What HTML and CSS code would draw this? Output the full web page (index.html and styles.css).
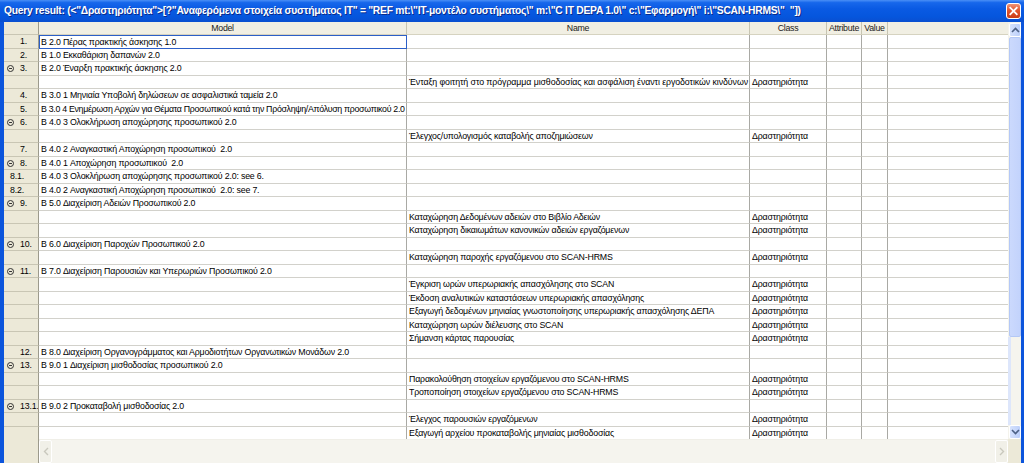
FILE: index.html
```html
<!DOCTYPE html>
<html>
<head>
<meta charset="utf-8">
<link rel="stylesheet" href="styles.css">
</head>
<body>
<div class="window">
  <div class="titlebar">
    <span class="title">Query result: (&lt;"Δραστηριότητα"&gt;[?"Αναφερόμενα στοιχεία συστήματος IT" = "REF mt:\"IT-μοντέλο συστήματος\" m:\"C IT DEPA 1.0\" c:\"Εφαρμογή\" i:\"SCAN-HRMS\"&nbsp; "])</span>
    <span class="close"><svg width="15" height="16" viewBox="0 0 15 16"><defs><linearGradient id="cg" x1="0" y1="0" x2="0" y2="1"><stop offset="0" stop-color="#f09a7e"/><stop offset="0.45" stop-color="#e2562e"/><stop offset="1" stop-color="#c83b14"/></linearGradient></defs><rect x="0.5" y="0.5" width="14" height="15" rx="2.5" fill="url(#cg)" stroke="#ffffff"/><path d="M4.3 4.8 L10.7 11.2 M10.7 4.8 L4.3 11.2" stroke="#ffffff" stroke-width="1.8" stroke-linecap="square"/></svg></span>
  </div>
  <div class="body">
    <div class="main">
      <div class="table">
        <div class="row head">
          <div class="c rn"></div><div class="c">Model</div><div class="c">Name</div><div class="c">Class</div><div class="c">Attribute</div><div class="c">Value</div><div class="c fill"></div>
        </div>
        <div class="row"><div class="c rn"><span class="num">1.</span></div><div class="c t focus">B 2.0 Πέρας πρακτικής άσκησης 1.0</div><div class="c t"></div><div class="c t"></div><div class="c"></div><div class="c"></div><div class="c fill"></div></div>
        <div class="row"><div class="c rn"><span class="num">2.</span></div><div class="c t">B 1.0 Εκκαθάριση δαπανών 2.0</div><div class="c t"></div><div class="c t"></div><div class="c"></div><div class="c"></div><div class="c fill"></div></div>
        <div class="row"><div class="c rn"><span class="ex"></span><span class="num">3.</span></div><div class="c t">B 2.0 Έναρξη πρακτικής άσκησης 2.0</div><div class="c t"></div><div class="c t"></div><div class="c"></div><div class="c"></div><div class="c fill"></div></div>
        <div class="row"><div class="c rn"></div><div class="c t"></div><div class="c t wide">Ένταξη φοιτητή στο πρόγραμμα μισθοδοσίας και ασφάλιση έναντι εργοδοτικών κινδύνων</div><div class="c t">Δραστηριότητα</div><div class="c"></div><div class="c"></div><div class="c fill"></div></div>
        <div class="row"><div class="c rn"><span class="num">4.</span></div><div class="c t">B 3.0 1 Μηνιαία Υποβολή δηλώσεων σε ασφαλιστικά ταμεία 2.0</div><div class="c t"></div><div class="c t"></div><div class="c"></div><div class="c"></div><div class="c fill"></div></div>
        <div class="row"><div class="c rn"><span class="num">5.</span></div><div class="c t tight">B 3.0 4 Ενημέρωση Αρχών για Θέματα Προσωπικού κατά την Πρόσληψη/Απόλυση προσωπικού 2.0</div><div class="c t"></div><div class="c t"></div><div class="c"></div><div class="c"></div><div class="c fill"></div></div>
        <div class="row"><div class="c rn"><span class="ex"></span><span class="num">6.</span></div><div class="c t">B 4.0 3 Ολοκλήρωση αποχώρησης προσωπικού 2.0</div><div class="c t"></div><div class="c t"></div><div class="c"></div><div class="c"></div><div class="c fill"></div></div>
        <div class="row"><div class="c rn"></div><div class="c t"></div><div class="c t">Έλεγχος/υπολογισμός καταβολής αποζημιώσεων</div><div class="c t">Δραστηριότητα</div><div class="c"></div><div class="c"></div><div class="c fill"></div></div>
        <div class="row"><div class="c rn"><span class="num">7.</span></div><div class="c t">B 4.0 2 Αναγκαστική Αποχώρηση προσωπικού&nbsp; 2.0</div><div class="c t"></div><div class="c t"></div><div class="c"></div><div class="c"></div><div class="c fill"></div></div>
        <div class="row"><div class="c rn"><span class="ex"></span><span class="num">8.</span></div><div class="c t">B 4.0 1 Αποχώρηση προσωπικού&nbsp; 2.0</div><div class="c t"></div><div class="c t"></div><div class="c"></div><div class="c"></div><div class="c fill"></div></div>
        <div class="row"><div class="c rn"><span class="num sub">8.1.</span></div><div class="c t">B 4.0 3 Ολοκλήρωση αποχώρησης προσωπικού 2.0: see 6.</div><div class="c t"></div><div class="c t"></div><div class="c"></div><div class="c"></div><div class="c fill"></div></div>
        <div class="row"><div class="c rn"><span class="num sub">8.2.</span></div><div class="c t">B 4.0 2 Αναγκαστική Αποχώρηση προσωπικού&nbsp; 2.0: see 7.</div><div class="c t"></div><div class="c t"></div><div class="c"></div><div class="c"></div><div class="c fill"></div></div>
        <div class="row"><div class="c rn"><span class="ex"></span><span class="num">9.</span></div><div class="c t">B 5.0 Διαχείριση Αδειών Προσωπικού 2.0</div><div class="c t"></div><div class="c t"></div><div class="c"></div><div class="c"></div><div class="c fill"></div></div>
        <div class="row"><div class="c rn"></div><div class="c t"></div><div class="c t">Καταχώρηση Δεδομένων αδειών στο Βιβλίο Αδειών</div><div class="c t">Δραστηριότητα</div><div class="c"></div><div class="c"></div><div class="c fill"></div></div>
        <div class="row"><div class="c rn"></div><div class="c t"></div><div class="c t">Καταχώρηση δικαιωμάτων κανονικών αδειών εργαζόμενων</div><div class="c t">Δραστηριότητα</div><div class="c"></div><div class="c"></div><div class="c fill"></div></div>
        <div class="row"><div class="c rn"><span class="ex"></span><span class="num">10.</span></div><div class="c t">B 6.0 Διαχείριση Παροχών Προσωπικού 2.0</div><div class="c t"></div><div class="c t"></div><div class="c"></div><div class="c"></div><div class="c fill"></div></div>
        <div class="row"><div class="c rn"></div><div class="c t"></div><div class="c t">Καταχώρηση παροχής εργαζόμενου στο SCAN-HRMS</div><div class="c t">Δραστηριότητα</div><div class="c"></div><div class="c"></div><div class="c fill"></div></div>
        <div class="row"><div class="c rn"><span class="ex"></span><span class="num">11.</span></div><div class="c t">B 7.0 Διαχείριση Παρουσιών και Υπερωριών Προσωπικού 2.0</div><div class="c t"></div><div class="c t"></div><div class="c"></div><div class="c"></div><div class="c fill"></div></div>
        <div class="row"><div class="c rn"></div><div class="c t"></div><div class="c t">Έγκριση ωρών υπερωριακής απασχόλησης στο SCAN</div><div class="c t">Δραστηριότητα</div><div class="c"></div><div class="c"></div><div class="c fill"></div></div>
        <div class="row"><div class="c rn"></div><div class="c t"></div><div class="c t">Έκδοση αναλυτικών καταστάσεων υπερωριακής απασχόλησης</div><div class="c t">Δραστηριότητα</div><div class="c"></div><div class="c"></div><div class="c fill"></div></div>
        <div class="row"><div class="c rn"></div><div class="c t"></div><div class="c t">Εξαγωγή δεδομένων μηνιαίας γνωστοποίησης υπερωριακής απασχόλησης ΔΕΠΑ</div><div class="c t">Δραστηριότητα</div><div class="c"></div><div class="c"></div><div class="c fill"></div></div>
        <div class="row"><div class="c rn"></div><div class="c t"></div><div class="c t">Καταχώρηση ωρών διέλευσης στο SCAN</div><div class="c t">Δραστηριότητα</div><div class="c"></div><div class="c"></div><div class="c fill"></div></div>
        <div class="row"><div class="c rn"></div><div class="c t"></div><div class="c t">Σήμανση κάρτας παρουσίας</div><div class="c t">Δραστηριότητα</div><div class="c"></div><div class="c"></div><div class="c fill"></div></div>
        <div class="row"><div class="c rn"><span class="num">12.</span></div><div class="c t">B 8.0 Διαχείριση Οργανογράμματος και Αρμοδιοτήτων Οργανωτικών Μονάδων 2.0</div><div class="c t"></div><div class="c t"></div><div class="c"></div><div class="c"></div><div class="c fill"></div></div>
        <div class="row"><div class="c rn"><span class="ex"></span><span class="num">13.</span></div><div class="c t">B 9.0 1 Διαχείριση μισθοδοσίας προσωπικού 2.0</div><div class="c t"></div><div class="c t"></div><div class="c"></div><div class="c"></div><div class="c fill"></div></div>
        <div class="row"><div class="c rn"></div><div class="c t"></div><div class="c t">Παρακολούθηση στοιχείων εργαζόμενου στο SCAN-HRMS</div><div class="c t">Δραστηριότητα</div><div class="c"></div><div class="c"></div><div class="c fill"></div></div>
        <div class="row"><div class="c rn"></div><div class="c t"></div><div class="c t">Τροποποίηση στοιχείων εργαζόμενου στο SCAN-HRMS</div><div class="c t">Δραστηριότητα</div><div class="c"></div><div class="c"></div><div class="c fill"></div></div>
        <div class="row"><div class="c rn"><span class="ex"></span><span class="num">13.1.</span></div><div class="c t">B 9.0 2 Προκαταβολή μισθοδοσίας 2.0</div><div class="c t"></div><div class="c t"></div><div class="c"></div><div class="c"></div><div class="c fill"></div></div>
        <div class="row"><div class="c rn"></div><div class="c t"></div><div class="c t">Έλεγχος παρουσιών εργαζόμενων</div><div class="c t">Δραστηριότητα</div><div class="c"></div><div class="c"></div><div class="c fill"></div></div>
        <div class="row"><div class="c rn"></div><div class="c t"></div><div class="c t">Εξαγωγή αρχείου προκαταβολής μηνιαίας μισθοδοσίας</div><div class="c t">Δραστηριότητα</div><div class="c"></div><div class="c"></div><div class="c fill"></div></div>
        <div class="row"><div class="c rn"></div><div class="c t"></div><div class="c t">Καταχώρηση πρόσθετων στοιχείων μισθοδοσίας</div><div class="c t">Δραστηριότητα</div><div class="c"></div><div class="c"></div><div class="c fill"></div></div>
      </div>
      <div class="vscroll">
        <div class="vtop"></div>
        <div class="sbtn"><svg width="9" height="6" viewBox="0 0 9 6"><path d="M1 5 L4.5 1.5 L8 5" fill="none" stroke="#4d6185" stroke-width="1.6"/></svg></div>
        <div class="thumb"></div>
        <div class="track"></div>
        <div class="sbtn"><svg width="9" height="6" viewBox="0 0 9 6"><path d="M1 1 L4.5 4.5 L8 1" fill="none" stroke="#4d6185" stroke-width="1.6"/></svg></div>
      </div>
    </div>
    <div class="bottom">
      <div class="rnpad"></div>
      <div class="hscroll">
        <div class="hbtn"><svg width="6" height="9" viewBox="0 0 6 9"><path d="M5 1 L1.5 4.5 L5 8" fill="none" stroke="#c9c8bd" stroke-width="1.4"/></svg></div>
        <div class="htrack"></div>
        <div class="hbtn"><svg width="6" height="9" viewBox="0 0 6 9"><path d="M1 1 L4.5 4.5 L1 8" fill="none" stroke="#c9c8bd" stroke-width="1.4"/></svg></div>
      </div>
      <div class="corner"></div>
    </div>
  </div>
</div>
</body>
</html>
```
FILE: styles.css
```css
html, body {
  margin: 0;
  padding: 0;
  background: #0a4fd6;
  overflow: hidden;
}
.window {
  width: 1024px;
  height: 463px;
  display: flex;
  flex-direction: column;
  background: #0c55dc;
  overflow: hidden;
}
.titlebar {
  height: 22px;
  flex: none;
  display: flex;
  align-items: center;
  padding-left: 4px;
  padding-right: 3px;
  background: linear-gradient(#4a8ff6 0%, #1767eb 12%, #0a5ae3 40%, #0556dd 75%, #0a4fd0 100%);
}
.title {
  flex: 1;
  color: #ffffff;
  font-family: "Liberation Sans", Arial, sans-serif;
  font-weight: bold;
  font-size: 10.3px;
  letter-spacing: -0.26px;
  white-space: nowrap;
  text-shadow: 1px 1px 0 #0a2a8a;
  padding-bottom: 1px;
}
.close {
  width: 15px;
  height: 16px;
  display: flex;
}
.body {
  flex: 1;
  display: flex;
  flex-direction: column;
  margin-left: 4px;
  margin-right: 3px;
  background: #ffffff;
  min-height: 0;
}
.main {
  height: 417px;
  display: flex;
  overflow: hidden;
}
.table {
  width: 1004px;
  flex: none;
  font-family: "Liberation Sans", Arial, sans-serif;
  font-size: 8.8px;
  letter-spacing: -0.18px;
  color: #000000;
}
.row {
  display: grid;
  grid-template-columns: 35px 368px 343px 77px 35px 26px 120px;
  height: 13.5px;
}
.row.head {
  height: 13px;
  background: #f1efe3;
}
.c {
  box-sizing: border-box;
  border-right: 1px solid #a9a9a4;
  border-bottom: 1px solid #d2d1cb;
  line-height: 12.5px;
  white-space: nowrap;
  overflow: hidden;
}
.head .c {
  text-align: center;
  border-right: 1px solid #c7c5b2;
  border-bottom: 1px solid #d6d3c0;
  line-height: 12px;
  letter-spacing: -0.3px;
  color: #222222;
}
.c.fill {
  border-right: none;
}
.c.t {
  padding-left: 2px;
}
.c.t.tight {
  letter-spacing: -0.3px;
}
.c.t.wide {
  letter-spacing: -0.08px;
}
.c.rn {
  background: #ece9d8;
  border-right: 1px solid #9c9a8c;
  border-bottom: 1px solid #c9c6b4;
  position: relative;
}
.num {
  position: absolute;
  left: 16px;
  top: 0;
}
.num.sub {
  left: 6px;
}
.ex {
  position: absolute;
  left: 3px;
  top: 3px;
  width: 5px;
  height: 5px;
  border: 1px solid #333333;
  border-radius: 50%;
}
.ex::after {
  content: "";
  position: absolute;
  left: 1px;
  top: 2px;
  width: 3px;
  height: 1px;
  background: #333333;
}
.c.focus {
  border: 1px solid #2c5fc7;
  padding-left: 1px;
}
.vscroll {
  width: 13px;
  flex: none;
  display: flex;
  flex-direction: column;
  background: #f4f3ec;
}
.vtop {
  height: 1px;
  background: #f4f3ec;
}
.sbtn {
  height: 14px;
  flex: none;
  box-sizing: border-box;
  margin: 0 0 0 1px;
  border: 1px solid #ffffff;
  border-radius: 2px;
  background: linear-gradient(90deg, #d6e2fd, #bccffa);
  display: flex;
  align-items: center;
  justify-content: center;
}
.thumb {
  height: 300px;
  flex: none;
  box-sizing: border-box;
  margin-left: 1px;
  border: 1px solid #b4c8f6;
  border-radius: 2px;
  background: linear-gradient(90deg, #cbd9fd, #c3d3fc);
}
.track {
  flex: 1;
  background: linear-gradient(90deg, #dde6fb 0, #dde6fb 3px, #f5f4ee 3px);
}
.bottom {
  flex: 1;
  display: flex;
}
.rnpad {
  width: 35px;
  flex: none;
  background: #ece9d8;
  border-right: 1px solid #9c9a8c;
  box-sizing: border-box;
}
.hscroll {
  width: 969px;
  flex: none;
  display: flex;
  background: #f5f4ee;
  border-top: 1px solid #f0efe8;
  box-sizing: border-box;
}
.hbtn {
  width: 13px;
  flex: none;
  box-sizing: border-box;
  border: 1px solid #ffffff;
  border-radius: 2px;
  background: #f1f0e8;
  display: flex;
  align-items: center;
  justify-content: center;
}
.htrack {
  flex: 1;
}
.corner {
  flex: 1;
  background: #ece9d8;
}
```
